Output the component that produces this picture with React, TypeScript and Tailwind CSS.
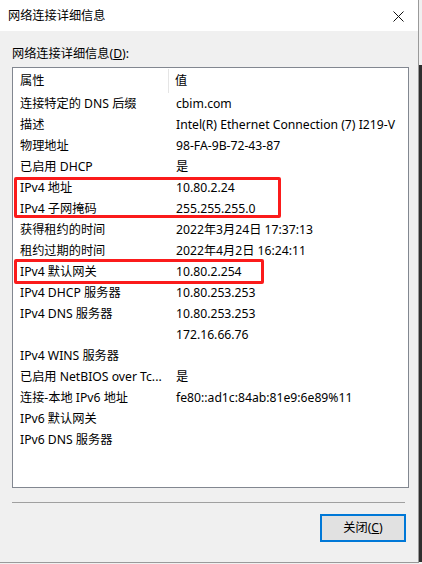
import React from "react";

const rows: [string, string][] = [
  ["连接特定的 DNS 后缀", "cbim.com"],
  ["描述", "Intel(R) Ethernet Connection (7) I219-V"],
  ["物理地址", "98-FA-9B-72-43-87"],
  ["已启用 DHCP", "是"],
  ["IPv4 地址", "10.80.2.24"],
  ["IPv4 子网掩码", "255.255.255.0"],
  ["获得租约的时间", "2022年3月24日 17:37:13"],
  ["租约过期的时间", "2022年4月2日 16:24:11"],
  ["IPv4 默认网关", "10.80.2.254"],
  ["IPv4 DHCP 服务器", "10.80.253.253"],
  ["IPv4 DNS 服务器", "10.80.253.253"],
  ["", "172.16.66.76"],
  ["IPv4 WINS 服务器", ""],
  ["已启用 NetBIOS over Tc...", "是"],
  ["连接-本地 IPv6 地址", "fe80::ad1c:84ab:81e9:6e89%11"],
  ["IPv6 默认网关", ""],
  ["IPv6 DNS 服务器", ""],
];

export default function App() {
  return (
    <div className="flex w-[422px] h-[564px] bg-[#f0f0f0] text-[12.2px] text-black font-['Noto_Sans','Noto_Sans_CJK_SC',sans-serif] leading-4 overflow-hidden">
      <div className="flex flex-col w-[419px] h-[563px] border-r border-b border-[#9a9a9a]">
        {/* title bar */}
        <div className="flex items-center justify-between h-[31px] bg-white pl-2 pr-[14px] pt-px shrink-0">
          <span>网络连接详细信息</span>
          <svg width="11" height="11" viewBox="0 0 11 11">
            <path d="M0.5 0.5 L10.5 10.5 M10.5 0.5 L0.5 10.5" stroke="#111" strokeWidth="1" />
          </svg>
        </div>

        <div className="flex flex-col px-3 pt-[15px]">
          <div className="h-4">
            网络连接详细信息(<span className="underline">D</span>):
          </div>

          {/* list view */}
          <div className="relative mt-[5px] w-[397px] h-[421px] border border-[#828790] bg-white pt-px">
            <div className="flex h-6 items-center">
              <div className="w-[156px] pl-[7px] h-full flex items-center border-r border-[#e5e5e5]">属性</div>
              <div className="pl-[6px]">值</div>
            </div>
            {rows.map(([k, v], i) => (
              <div key={i} className="flex h-[21px] items-center whitespace-nowrap">
                <div className="w-[157px] pl-[7px]">{k}</div>
                <div className="pl-[6px]">{v}</div>
              </div>
            ))}

            {/* annotations */}
            <div className="absolute left-[1px] top-[109px] w-[267px] h-[41px] border-[3px] border-[#fb1b1b] rounded-[2px]" />
            <div className="absolute left-[1px] top-[191px] w-[250px] h-[25px] border-[3px] border-[#fb1b1b] rounded-[2px]" />
          </div>

          <div className="mt-[14px] w-[393px] h-px bg-[#a0a0a0]" />

          <div className="flex justify-end mt-[11px]">
            <button className="w-[86px] h-[28px] border-2 border-[#0078d7] bg-[#e1e1e1] flex items-center justify-center">
              关闭(<span className="underline">C</span>)
            </button>
          </div>
        </div>
      </div>
      <div className="flex flex-col w-[3px]">
        <div className="h-[65px] bg-[#f0f0f0]" />
        <div className="h-[497px] bg-[#2f2f2f]" />
      </div>
    </div>
  );
}
